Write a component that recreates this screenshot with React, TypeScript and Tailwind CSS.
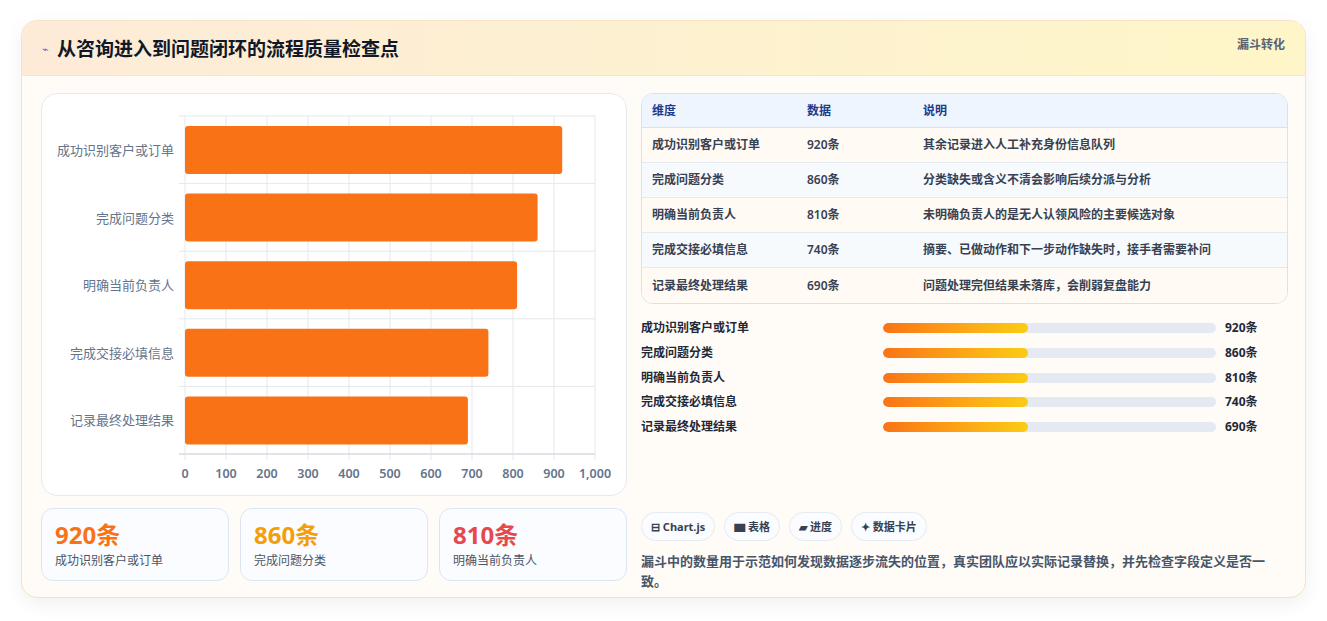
import React from 'react'

const rows = [
  { name: '成功识别客户或订单', value: 920, note: '其余记录进入人工补充身份信息队列' },
  { name: '完成问题分类', value: 860, note: '分类缺失或含义不清会影响后续分派与分析' },
  { name: '明确当前负责人', value: 810, note: '未明确负责人的是无人认领风险的主要候选对象' },
  { name: '完成交接必填信息', value: 740, note: '摘要、已做动作和下一步动作缺失时，接手者需要补问' },
  { name: '记录最终处理结果', value: 690, note: '问题处理完但结果未落库，会削弱复盘能力' },
]

const font = { fontFamily: '"Noto Sans", "Noto Sans CJK SC", sans-serif' }

function Chart() {
  // svg coords relative to the chart panel (panel at x40,y93)
  const x0 = 143
  const w = 410
  const top = 22
  const band = 67.6
  return (
    <svg width="586" height="403" className="block">
      {Array.from({ length: 11 }).map((_, i) => (
        <line key={i} x1={x0 + (w * i) / 10} x2={x0 + (w * i) / 10} y1={top} y2={366} stroke="#e5e7eb" strokeWidth="1" />
      ))}
      {Array.from({ length: 6 }).map((_, i) => (
        <line key={i} x1={x0 - 6} x2={x0 + w} y1={top + band * i} y2={top + band * i} stroke="#e5e7eb" strokeWidth="1" />
      ))}
      <line x1={x0 - 6} x2={x0 + w} y1={top + band * 5} y2={top + band * 5} stroke="#cbd5e1" />
      {rows.map((r, i) => {
        const y = top + band * i + 10
        return (
          <g key={r.name}>
            <rect x={x0} y={y} width={(w * r.value) / 1000} height={48} rx="3" fill="#f97316" />
            <text x={132} y={y + 29} textAnchor="end" fontSize="13" fill="#64748b" style={font}>{r.name}</text>
          </g>
        )
      })}
      {Array.from({ length: 11 }).map((_, i) => (
        <text key={i} x={x0 + (w * i) / 10} y={384} textAnchor="middle" fontSize="12.5" fontWeight="600" fill="#64748b" style={font}>
          {i === 10 ? '1,000' : i * 100}
        </text>
      ))}
    </svg>
  )
}

export default function App() {
  const stats = [
    { v: '920条', l: '成功识别客户或订单', c: 'text-[#f97316]' },
    { v: '860条', l: '完成问题分类', c: 'text-[#f59e0b]' },
    { v: '810条', l: '明确当前负责人', c: 'text-[#e5484d]' },
  ]
  return (
    <div className="w-[1327px] h-[621px] bg-white pt-5 pl-[21px]" style={font}>
      <div className="w-[1285px] h-[578px] rounded-2xl border border-[#f6e2c4] bg-[#fffcf8] shadow-[0_6px_20px_rgba(0,0,0,0.06)] overflow-hidden">
        <div className="h-[55px] flex items-start justify-between px-5 bg-gradient-to-r from-[#fdebd8] to-[#fef6c8] border-b border-[#f3e6d3]">
          <div className="flex items-center gap-2 pt-[14px]">
            <span className="text-[11px] text-[#4f6bed]">⌁</span>
            <h1 className="text-[19px] font-bold text-[#111827]">从咨询进入到问题闭环的流程质量检查点</h1>
          </div>
          <span className="pt-[15px] text-[12px] font-bold text-[#5b6472]">漏斗转化</span>
        </div>
        <div className="flex gap-[14px] pl-[19px] pt-[17px]">
          <div className="w-[586px] flex flex-col gap-3">
            <div className="h-[403px] rounded-2xl border border-[#e5e9f0] bg-white overflow-hidden">
              <Chart />
            </div>
            <div className="grid grid-cols-3 gap-[11px]">
              {stats.map((s) => (
                <div key={s.l} className="h-[73px] rounded-xl border border-[#dbe6f3] bg-[#fafcff] px-[13px] pt-[10px]">
                  <div className={`text-[24px] font-bold leading-8 ${s.c}`}>{s.v}</div>
                  <div className="text-[12px] text-[#4b5563] mt-[1px]">{s.l}</div>
                </div>
              ))}
            </div>
          </div>
          <div className="w-[647px] flex flex-col">
            <div className="rounded-xl border border-[#d6e2f0] overflow-hidden">
              <div className="h-[34px] flex items-center bg-[#eef5fe] border-b border-[#d6e2f0] text-[12px] font-bold text-[#1e3a8a] px-[10px]">
                <span className="w-[155px]">维度</span>
                <span className="w-[116px]">数据</span>
                <span>说明</span>
              </div>
              {rows.map((r, i) => (
                <div key={r.name} className={`h-[35px] flex items-center px-[10px] text-[12px] font-semibold text-[#374151] ${i % 2 ? 'bg-[#f7fafd]' : 'bg-[#fffaf3]'} ${i < 4 ? 'border-b border-[#e3eaf2]' : ''}`}>
                  <span className="w-[155px]">{r.name}</span>
                  <span className="w-[116px]">{r.value}条</span>
                  <span>{r.note}</span>
                </div>
              ))}
            </div>
            <div className="mt-[12px] flex flex-col">
              {rows.map((r) => (
                <div key={r.name} className="h-[24.7px] flex items-center text-[12px] font-semibold text-[#1f2937]">
                  <span className="w-[242px]">{r.name}</span>
                  <div className="w-[333px] h-[10px] rounded-full bg-[#e5e9f2] overflow-hidden">
                    <div className="h-full w-[145px] rounded-full bg-gradient-to-r from-[#f97316] to-[#facc15]" />
                  </div>
                  <span className="ml-[9px] font-bold">{r.value}条</span>
                </div>
              ))}
            </div>
            <div className="mt-[73px] flex gap-[9px]">
              {['⊟ Chart.js', '▆ 表格', '▰ 进度', '✦ 数据卡片'].map((t) => (
                <span key={t} className="h-[29px] px-[9px] flex items-center rounded-full border border-[#e5e9f0] bg-[#fafcff] text-[11px] font-bold text-[#374151]">{t}</span>
              ))}
            </div>
            <p className="mt-[10px] text-[13px] leading-5 font-semibold text-[#475569] w-[630px]">
              漏斗中的数量用于示范如何发现数据逐步流失的位置，真实团队应以实际记录替换，并先检查字段定义是否一致。
            </p>
          </div>
        </div>
      </div>
    </div>
  )
}
